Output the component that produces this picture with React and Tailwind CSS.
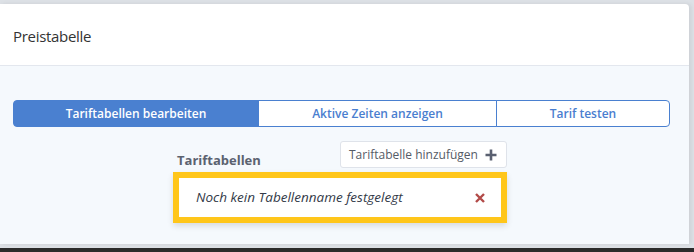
import React from "react";

export default function App() {
  const tabs = [
    { label: "Tariftabellen bearbeiten", w: "w-[246px]", active: true },
    { label: "Aktive Zeiten anzeigen", w: "w-[239px]" },
    { label: "Tarif testen", w: "w-[174px]" },
  ];

  return (
    <div
      className="w-[694px] h-[252px] bg-[#dde1e6] pt-[4px] overflow-hidden flex flex-col"
      style={{ fontFamily: "'Open Sans', 'Noto Sans', sans-serif" }}
    >
      <div className="w-[689px] bg-white rounded-tr-[4px] shadow-[2px_0_4px_rgba(0,0,0,0.08)]">
        {/* Header */}
        <div className="h-[62px] flex items-center pl-[13px] pt-[4px] border-b border-[#e3e7ee]">
          <h2 className="text-[15px] text-[#333] tracking-[-0.3px]">Preistabelle</h2>
        </div>

        {/* Body */}
        <div className="h-[178px] bg-[#f5f9fd] pt-[34px] pl-[13px]">
          {/* Tabs */}
          <div className="flex h-[27px]">
            {tabs.map((t, i) => (
              <button
                key={t.label}
                className={`${t.w} h-full text-[12px] font-semibold border border-[#4a80d0] ${
                  t.active ? "bg-[#4a80d0] text-white" : "bg-white text-[#4a7ecf]"
                } ${i === 0 ? "rounded-l-[4px]" : "-ml-px"} ${i === 2 ? "rounded-r-[4px]" : ""}`}
              >
                {t.label}
              </button>
            ))}
          </div>

          {/* Tariftabellen */}
          <div className="w-[334px] ml-[160px] mt-[14px]">
            <div className="flex items-end justify-between">
              <span className="pl-[4px] leading-[15px] text-[13px] font-bold text-[#5b6270]">Tariftabellen</span>
              <button className="h-[27px] w-[167px] flex items-center justify-between pl-[8px] pr-[9px] bg-white border border-[#dfe3ea] rounded-[3px] text-[12px] text-[#555b66]">
                Tariftabelle hinzufügen
                <svg width="12" height="12" viewBox="0 0 12 12">
                  <path d="M6 0.5v11M0.5 6h11" stroke="#5a6070" strokeWidth="2.6" />
                </svg>
              </button>
            </div>
            <div className="mt-[4px] h-[51px] border-[6px] border-[#ffc61a] bg-white flex items-center justify-between pl-[17px] pr-[16px] shadow-[0_3px_6px_rgba(0,0,0,0.12)]">
              <span className="italic text-[13.5px] text-[#333a48]">Noch kein Tabellenname festgelegt</span>
              <svg width="10" height="10" viewBox="0 0 10 10">
                <path d="M1 1l8 8M9 1l-8 8" stroke="#b24a48" strokeWidth="2.4" />
              </svg>
            </div>
          </div>
        </div>
      </div>
      <div className="h-[4px]" />
      <div className="flex-1 bg-[#2b2b2b]" />
    </div>
  );
}
